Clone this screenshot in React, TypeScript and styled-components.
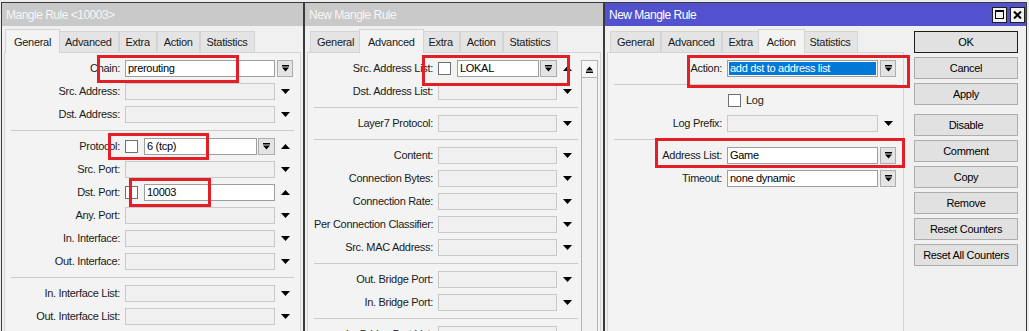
import styled, { createGlobalStyle } from 'styled-components';

const GlobalStyle = createGlobalStyle`
  html, body {
    margin: 0;
    padding: 0;
    background: #ececec;
  }
  body {
    font-family: "Liberation Sans", Arial, sans-serif;
    font-size: 11px;
    letter-spacing: -0.3px;
    color: #1a1a1a;
  }
  #root {
    height: 331px;
    overflow: hidden;
  }
`;

const Desktop = styled.div`
  display: flex;
  align-items: flex-start;
  height: 331px;
  padding-top: 2px;
  box-sizing: border-box;
  overflow: hidden;
`;

const Window = styled.section<{ $w: number; $first?: boolean }>`
  position: relative;
  flex: none;
  display: flex;
  flex-direction: column;
  width: ${(p) => p.$w}px;
  height: 329px;
  margin-left: ${(p) => (p.$first ? 1 : 0)}px;
  box-sizing: border-box;
  border: 1px solid #3a3a3a;
  border-bottom: none;
  background: #f0f0f0;
  overflow: hidden;
`;

const TitleBar = styled.header<{ $active?: boolean }>`
  flex: none;
  display: flex;
  align-items: center;
  justify-content: space-between;
  height: 23px;
  padding: 0 1px 0 4px;
  background: ${(p) => (p.$active ? '#5252cf' : '#c9c9c9')};
  color: ${(p) => (p.$active ? '#ffffff' : '#f6f6f6')};
  font-size: 12px;
  letter-spacing: -0.5px;
  white-space: nowrap;
`;

const TitleButtons = styled.div`
  display: flex;
  gap: 3px;
`;

const CaptionButton = styled.div`
  display: flex;
  align-items: center;
  justify-content: center;
  width: 15px;
  height: 16px;
  box-sizing: border-box;
  border: 1px solid #1e1e1e;
  background: #f2f2f2;
`;

const Body = styled.div`
  flex: 1;
  display: flex;
  min-height: 0;
  padding: 0 2px;
`;

const Main = styled.div<{ $w?: number }>`
  display: flex;
  flex-direction: column;
  ${(p) => (p.$w ? `flex: none; width: ${p.$w}px;` : 'flex: 1;')}
  min-width: 0;
`;

const TabStrip = styled.div`
  flex: none;
  display: flex;
  align-items: flex-end;
  height: 23px;
  margin-top: 3px;
  padding-left: 3px;
  position: relative;
  z-index: 2;
`;

const Tab = styled.div<{ $on?: boolean }>`
  display: flex;
  align-items: center;
  height: ${(p) => (p.$on ? 24 : 21)}px;
  padding: 0 ${(p) => (p.$on ? 8 : 6)}px;
  margin: 0 ${(p) => (p.$on ? -2 : 0)}px ${(p) => (p.$on ? -1 : 0)}px;
  box-sizing: border-box;
  border: 1px solid #d4d4d4;
  border-bottom: none;
  background: ${(p) => (p.$on ? '#f3f3f3' : '#e4e4e4')};
  position: relative;
  z-index: ${(p) => (p.$on ? 2 : 1)};
  white-space: nowrap;
`;

const Panel = styled.div`
  flex: 1;
  display: flex;
  min-height: 0;
  border: 1px solid #d4d4d4;
  border-bottom: none;
  background: #f3f3f3;
`;

const Form = styled.div<{ $padR: number }>`
  flex: 1;
  display: flex;
  flex-direction: column;
  padding: 7px ${(p) => p.$padR}px 0 6px;
  min-width: 0;
`;

const Row = styled.div`
  flex: none;
  display: flex;
  height: 23px;
`;

const Label = styled.div<{ $w: number }>`
  flex: none;
  width: ${(p) => p.$w}px;
  margin-right: 5px;
  line-height: 17px;
  text-align: right;
  white-space: nowrap;
`;

const Field = styled.div<{ $w: number }>`
  flex: none;
  display: flex;
  width: ${(p) => p.$w}px;
  height: 17px;
`;

const Input = styled.div<{ $off?: boolean; $sel?: boolean }>`
  flex: 1;
  height: 17px;
  box-sizing: border-box;
  padding: 0 2px;
  border: 1px solid ${(p) => (p.$off ? '#c9c9c9' : '#9e9e9e')};
  background: ${(p) => (p.$off ? '#f0f0f0' : p.$sel ? '#0078d7' : '#ffffff')};
  box-shadow: ${(p) => (p.$sel ? 'inset 0 0 0 1px #ffffff' : 'none')};
  color: ${(p) => (p.$sel ? '#ffffff' : '#000000')};
  line-height: 15px;
  white-space: nowrap;
  overflow: hidden;
`;

const CheckBox = styled.div<{ $lead?: boolean }>`
  flex: none;
  width: 13px;
  height: 13px;
  margin: 2px 6px 0 ${(p) => (p.$lead ? 1 : 0)}px;
  box-sizing: border-box;
  border: 1px solid #707070;
  background: #ffffff;
`;

const CheckText = styled.span`
  line-height: 17px;
  margin-left: -1px;
`;

const DropButton = styled.div<{ $inline?: boolean }>`
  flex: none;
  display: flex;
  align-items: center;
  justify-content: center;
  width: ${(p) => (p.$inline ? 17 : 16)}px;
  height: 17px;
  margin-left: ${(p) => (p.$inline ? 1 : 2)}px;
  box-sizing: border-box;
  border: 1px solid #adadad;
  background: #e4e4e4;
`;

const SideSlot = styled.div`
  flex: none;
  display: flex;
  align-items: center;
  justify-content: center;
  width: 16px;
  height: 17px;
  margin-left: 2px;
`;

const Separator = styled.div`
  flex: none;
  height: 7px;
  margin-top: 1px;
  border-top: 1px solid #cbcbcb;
`;

const ScrollBar = styled.div`
  flex: none;
  width: 17px;
  margin: 7px 2px 0 0;
  box-sizing: border-box;
  border: 1px solid #b4b4b4;
  border-bottom: none;
  background: #f0f0f0;
`;

const ScrollButton = styled.div`
  display: flex;
  align-items: center;
  justify-content: center;
  height: 16px;
  border-bottom: 1px solid #b4b4b4;
  background: #f7f7f7;
`;

const ButtonColumn = styled.div`
  flex: none;
  display: flex;
  flex-direction: column;
  gap: 4px;
  width: 104px;
  margin: 5px 0 0 10px;
`;

const ActionButton = styled.div<{ $default?: boolean; $gap?: boolean }>`
  display: flex;
  align-items: center;
  justify-content: center;
  height: 22px;
  margin-top: ${(p) => (p.$gap ? 5 : 0)}px;
  box-sizing: border-box;
  border: 1px solid ${(p) => (p.$default ? '#1e1e1e' : '#adadad')};
  background: #e1e1e1;
  color: #000000;
  white-space: nowrap;
`;

const Mark = styled.div<{ $x: number; $y: number; $w: number; $h: number }>`
  position: absolute;
  left: ${(p) => p.$x}px;
  top: ${(p) => p.$y}px;
  width: ${(p) => p.$w}px;
  height: ${(p) => p.$h}px;
  box-sizing: border-box;
  border: 3px solid #e31e26;
  pointer-events: none;
  z-index: 5;
`;

type FieldSpec = {
  label: string;
  value?: string;
  off?: boolean;
  check?: boolean;
  inline?: boolean;
  sel?: boolean;
  side: 'drop' | 'up' | 'down';
};
type Item = FieldSpec | 'sep' | { checkLabel: string };

const TABS = ['General', 'Advanced', 'Extra', 'Action', 'Statistics'];

function DropIcon() {
  return (
    <svg width="7" height="7" viewBox="0 0 7 7">
      <rect x="0" y="0" width="7" height="1.5" fill="#000" />
      <path d="M0 2.5h7L3.5 6.5z" fill="#000" />
    </svg>
  );
}

function Arrow({ up }: { up?: boolean }) {
  return (
    <svg width="9" height="5" viewBox="0 0 9 5">
      <path d={up ? 'M0 5h9L4.5 0z' : 'M0 0h9L4.5 5z'} fill="#000" />
    </svg>
  );
}

function ScrollUpIcon() {
  return (
    <svg width="7" height="7" viewBox="0 0 7 7">
      <path d="M0 4.5h7L3.5 0.5z" fill="#000" />
      <rect x="0" y="5.5" width="7" height="1.5" fill="#000" />
    </svg>
  );
}

function Tabs({ active }: { active: string }) {
  return (
    <TabStrip>
      {TABS.map((t) => (
        <Tab key={t} $on={t === active}>
          {t}
        </Tab>
      ))}
    </TabStrip>
  );
}

function FormRows({ items, labelW, fieldW }: { items: Item[]; labelW: number; fieldW: number }) {
  return (
    <>
      {items.map((it, i) => {
        if (it === 'sep') return <Separator key={i} />;
        if ('checkLabel' in it) {
          return (
            <Row key={i}>
              <Label $w={labelW} />
              <Field $w={fieldW}>
                <CheckBox $lead />
                <CheckText>{it.checkLabel}</CheckText>
              </Field>
            </Row>
          );
        }
        return (
          <Row key={i}>
            <Label $w={labelW}>{it.label}</Label>
            <Field $w={fieldW}>
              {it.check && <CheckBox />}
              <Input $off={it.off} $sel={it.sel}>
                {it.value}
              </Input>
              {it.inline && (
                <DropButton $inline>
                  <DropIcon />
                </DropButton>
              )}
            </Field>
            {it.side === 'drop' ? (
              <DropButton>
                <DropIcon />
              </DropButton>
            ) : (
              <SideSlot>
                <Arrow up={it.side === 'up'} />
              </SideSlot>
            )}
          </Row>
        );
      })}
    </>
  );
}

const generalItems: Item[] = [
  { label: 'Chain:', value: 'prerouting', side: 'drop' },
  { label: 'Src. Address:', off: true, side: 'down' },
  { label: 'Dst. Address:', off: true, side: 'down' },
  'sep',
  { label: 'Protocol:', value: '6 (tcp)', check: true, inline: true, side: 'up' },
  { label: 'Src. Port:', off: true, side: 'down' },
  { label: 'Dst. Port:', value: '10003', check: true, side: 'up' },
  { label: 'Any. Port:', off: true, side: 'down' },
  { label: 'In. Interface:', off: true, side: 'down' },
  { label: 'Out. Interface:', off: true, side: 'down' },
  'sep',
  { label: 'In. Interface List:', off: true, side: 'down' },
  { label: 'Out. Interface List:', off: true, side: 'down' },
  'sep',
];

const advancedItems: Item[] = [
  { label: 'Src. Address List:', value: 'LOKAL', check: true, inline: true, side: 'up' },
  { label: 'Dst. Address List:', off: true, side: 'down' },
  'sep',
  { label: 'Layer7 Protocol:', off: true, side: 'down' },
  'sep',
  { label: 'Content:', off: true, side: 'down' },
  { label: 'Connection Bytes:', off: true, side: 'down' },
  { label: 'Connection Rate:', off: true, side: 'down' },
  { label: 'Per Connection Classifier:', off: true, side: 'down' },
  { label: 'Src. MAC Address:', off: true, side: 'down' },
  'sep',
  { label: 'Out. Bridge Port:', off: true, side: 'down' },
  { label: 'In. Bridge Port:', off: true, side: 'down' },
  'sep',
  { label: 'In. Bridge Port List:', off: true, side: 'down' },
];

const actionItems: Item[] = [
  { label: 'Action:', value: 'add dst to address list', sel: true, side: 'drop' },
  'sep',
  { checkLabel: 'Log' },
  { label: 'Log Prefix:', off: true, side: 'down' },
  'sep',
  { label: 'Address List:', value: 'Game', side: 'drop' },
  { label: 'Timeout:', value: 'none dynamic', side: 'drop' },
];

const BUTTONS = ['OK', 'Cancel', 'Apply', 'Disable', 'Comment', 'Copy', 'Remove', 'Reset Counters', 'Reset All Counters'];

export default function App() {
  return (
    <>
      <GlobalStyle />
      <Desktop>
        <Window $w={303} $first>
          <TitleBar>Mangle Rule &lt;10003&gt;</TitleBar>
          <Body>
            <Main>
              <Tabs active="General" />
              <Panel>
                <Form $padR={6}>
                  <FormRows items={generalItems} labelW={109} fieldW={150} />
                </Form>
              </Panel>
            </Main>
          </Body>
          <Mark $x={95} $y={52} $w={142} $h={28} />
          <Mark $x={106} $y={130} $w={101} $h={27} />
          <Mark $x={127} $y={175} $w={82} $h={29} />
        </Window>

        <Window $w={300}>
          <TitleBar>New Mangle Rule</TitleBar>
          <Body>
            <Main>
              <Tabs active="Advanced" />
              <Panel>
                <Form $padR={3}>
                  <FormRows items={advancedItems} labelW={119} fieldW={119} />
                </Form>
                <ScrollBar>
                  <ScrollButton>
                    <ScrollUpIcon />
                  </ScrollButton>
                </ScrollBar>
              </Panel>
            </Main>
          </Body>
          <Mark $x={117} $y={52} $w={148} $h={31} />
        </Window>

        <Window $w={423}>
          <TitleBar $active>
            New Mangle Rule
            <TitleButtons>
              <CaptionButton>
                <svg width="9" height="9" viewBox="0 0 9 9">
                  <rect x="0.5" y="0.5" width="8" height="8" fill="none" stroke="#000" />
                  <rect x="0" y="0" width="9" height="2" fill="#000" />
                </svg>
              </CaptionButton>
              <CaptionButton>
                <svg width="9" height="8" viewBox="0 0 9 8">
                  <path d="M1 0.5L8 7.5M8 0.5L1 7.5" stroke="#000" strokeWidth="2" />
                </svg>
              </CaptionButton>
            </TitleButtons>
          </TitleBar>
          <Body>
            <Main $w={297}>
              <Tabs active="Action" />
              <Panel>
                <Form $padR={6}>
                  <FormRows items={actionItems} labelW={108} fieldW={151} />
                </Form>
              </Panel>
            </Main>
            <ButtonColumn>
              {BUTTONS.map((b) => (
                <ActionButton key={b} $default={b === 'OK'} $gap={b === 'Disable'}>
                  {b}
                </ActionButton>
              ))}
            </ButtonColumn>
          </Body>
          <Mark $x={82} $y={52} $w={223} $h={33} />
          <Mark $x={50} $y={135} $w={250} $h={30} />
        </Window>
      </Desktop>
    </>
  );
}
